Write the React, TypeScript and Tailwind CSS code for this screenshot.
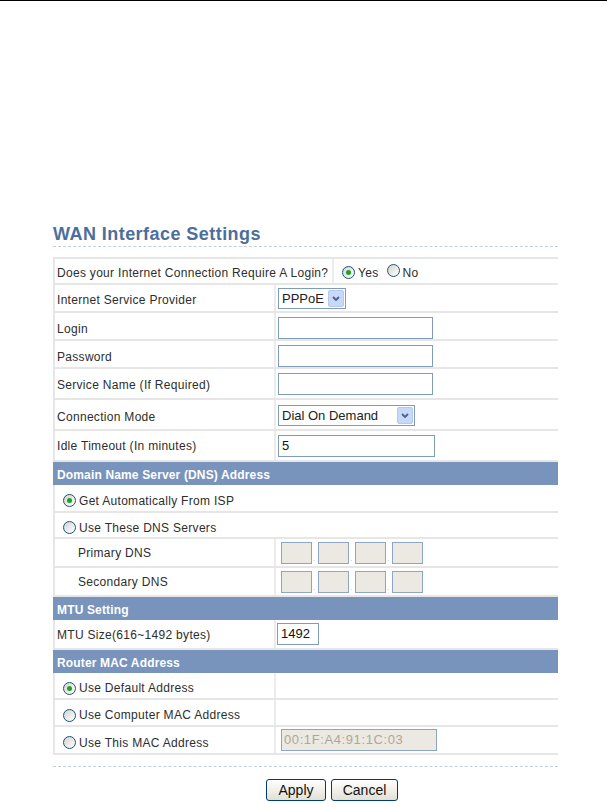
import type { ReactNode } from "react";
import clsx from "clsx";

// XP-era router admin page: WAN settings form

function Radio({ checked = false }: { checked?: boolean }) {
  return (
    <span className="inline-flex h-[13px] w-[13px] shrink-0 items-center justify-center rounded-full border border-[#1c5180] bg-linear-to-br from-[#d4d4cc] to-white">
      {checked && <span className="h-[5px] w-[5px] rounded-full bg-[#21a121]" />}
    </span>
  );
}

function Chevron() {
  return (
    <svg width="8" height="5" viewBox="0 0 8 5" fill="none">
      <path d="M1 1l3 3 3-3" stroke="#4d6185" strokeWidth="1.8" />
    </svg>
  );
}

function Select({ value, width }: { value: string; width: string }) {
  return (
    <div className={clsx("flex h-[21px] items-center border border-[#7f9db9] bg-white", width)}>
      <span className="flex-1 pl-[3px] text-[13px] leading-none text-[#222]">{value}</span>
      <span className="mr-px flex h-[17px] w-[16px] items-center justify-center rounded-[2px] border border-[#b6c8ef] bg-[#c8d8fb]">
        <Chevron />
      </span>
    </div>
  );
}

function TextBox({ value = "", width }: { value?: string; width: string }) {
  return (
    <div className={clsx("flex h-[22px] items-center border border-[#7f9db9] bg-white pl-[3px] text-[13px] text-[#111]", width)}>
      {value}
    </div>
  );
}

function IpBox() {
  return <div className="h-[22px] w-[31px] border border-[#8ea6c4] bg-[#ebe9e1]" />;
}

function Row({
  h,
  children,
  right,
  leftW = "w-[219px]",
  top = false,
}: {
  h: string;
  children: ReactNode;
  right?: ReactNode;
  leftW?: string;
  top?: boolean;
}) {
  return (
    <div className={clsx("flex border-b-2 border-l-2 border-[#e6e6e6]", h, top && "border-t-2")}>
      <div className={clsx("flex items-center", right === undefined ? "flex-1" : leftW)}>{children}</div>
      {right !== undefined && (
        <div className="flex flex-1 items-center border-l-2 border-[#ececec]">{right}</div>
      )}
    </div>
  );
}

function Label({ children, indent = "pl-[2px]", pad = "pt-[4px]" }: { children: ReactNode; indent?: string; pad?: string }) {
  return <span className={clsx("text-[12px] tracking-[0.3px] text-[#2d2d2d]", indent, pad)}>{children}</span>;
}

function RadioLabel({ checked, children }: { checked?: boolean; children: ReactNode }) {
  return (
    <span className="flex items-center gap-[3px] pl-[8px] pt-[5px] text-[12px] tracking-[0.3px] text-[#2d2d2d]">
      <Radio checked={checked} />
      {children}
    </span>
  );
}

function Header({ children }: { children: ReactNode }) {
  return (
    <div className="flex h-[23px] items-center bg-[#7894bc] pl-[4px] pt-[2px] text-[12px] font-bold tracking-[0.15px] text-white">
      {children}
    </div>
  );
}

export default function App() {
  return (
    <div className="min-h-[807px] w-[607px] bg-white font-['Liberation_Sans',Arial,sans-serif]">
      <div className="h-px w-full bg-black" />

      <div className="ml-[53px] w-[505px]">
        <h1 className="mt-[223px] border-b border-dashed border-[#c5cfdc] pb-[2px] text-[18px] font-bold leading-[20px] tracking-[0.45px] text-[#4b6f9b]">
          WAN Interface Settings
        </h1>

        <div className="mt-[10px]">
          <Row
            h="h-[28px]"
            top
            leftW="w-[277px]"
            right={
              <span className="flex items-center pl-[8px] pt-[3px] text-[12px] tracking-[0.3px] text-[#2d2d2d]">
                <Radio checked />
                <span className="ml-[3px]">Yes</span>
                <span className="ml-[9px]">
                  <Radio />
                </span>
                <span className="ml-[2px]">No</span>
              </span>
            }
          >
            <Label pad="pt-[3px]">Does your Internet Connection Require A Login?</Label>
          </Row>
          <Row h="h-[28px]" right={<span className="pl-[2px]"><Select value="PPPoE" width="w-[68px]" /></span>}>
            <Label>Internet Service Provider</Label>
          </Row>
          <Row h="h-[28px]" right={<span className="pl-[2px] pt-[3px]"><TextBox width="w-[155px]" /></span>}>
            <Label pad="pt-[6px]">Login</Label>
          </Row>
          <Row h="h-[28px]" right={<span className="pl-[2px] pt-[3px]"><TextBox width="w-[155px]" /></span>}>
            <Label pad="pt-[6px]">Password</Label>
          </Row>
          <Row h="h-[31px]" right={<span className="pl-[2px]"><TextBox width="w-[155px]" /></span>}>
            <Label pad="pt-[2px]">Service Name (If Required)</Label>
          </Row>
          <Row h="h-[31px]" right={<span className="pl-[2px] pt-[2px]"><Select value="Dial On Demand" width="w-[137px]" /></span>}>
            <Label>Connection Mode</Label>
          </Row>
          <Row h="h-[31px]" right={<span className="pl-[2px]"><TextBox value="5" width="w-[157px]" /></span>}>
            <Label pad="pt-[1px]">Idle Timeout (In minutes)</Label>
          </Row>

          <Header>Domain Name Server (DNS) Address</Header>
          <Row h="h-[28px]">
            <RadioLabel checked>Get Automatically From ISP</RadioLabel>
          </Row>
          <Row h="h-[26px]">
            <RadioLabel>Use These DNS Servers</RadioLabel>
          </Row>
          {["Primary DNS", "Secondary DNS"].map((name) => (
            <Row
              key={name}
              h="h-[29px]"
              right={
                <span className="flex items-end pl-[5px]">
                  {[0, 1, 2, 3].map((i) => (
                    <span key={i} className="flex items-end">
                      <IpBox />
                      {i < 3 && <span className="w-[6px] pl-px text-[8px] leading-[10px] text-[#bbb]">.</span>}
                    </span>
                  ))}
                </span>
              }
            >
              <Label indent="pl-[23px]" pad="pt-[1px]">{name}</Label>
            </Row>
          ))}

          <Header>MTU Setting</Header>
          <Row h="h-[30px]" right={<span className="pl-px"><TextBox value="1492" width="w-[42px]" /></span>}>
            <Label pad="pt-[2px]">MTU Size(616~1492 bytes)</Label>
          </Row>

          <Header>Router MAC Address</Header>
          <Row h="h-[27px]" right={<span />}>
            <RadioLabel checked>Use Default Address</RadioLabel>
          </Row>
          <Row h="h-[27px]" right={<span />}>
            <RadioLabel>Use Computer MAC Address</RadioLabel>
          </Row>
          <Row
            h="h-[28px]"
            right={
              <span className="pl-[5px]">
                <div className="flex h-[22px] w-[156px] items-center border border-[#8ea6c4] bg-[#ebe9e1] pl-[2px] text-[13px] tracking-[0.6px] text-[#aca899]">
                  00:1F:A4:91:1C:03
                </div>
              </span>
            }
          >
            <RadioLabel>Use This MAC Address</RadioLabel>
          </Row>
        </div>

        <div className="mt-[11px] border-t border-dashed border-[#c5cfdc]" />
      </div>

      <div className="mt-[12px] flex gap-[5px] pl-[266px]">
        <button className="h-[22px] w-[60px] rounded-[3px] border border-[#003c74] bg-linear-to-b from-white to-[#e3e0d3] text-[14px] text-[#111]">
          Apply
        </button>
        <button className="h-[22px] w-[67px] rounded-[3px] border border-[#003c74] bg-linear-to-b from-white to-[#e3e0d3] text-[14px] text-[#111]">
          Cancel
        </button>
      </div>
    </div>
  );
}
